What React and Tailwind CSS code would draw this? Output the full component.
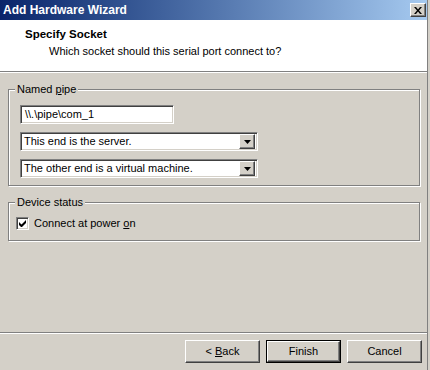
import React from 'react';

const sunken = 'border border-t-[#808080] border-l-[#808080] border-b-white border-r-white shadow-[inset_1px_1px_0_#404040,inset_-1px_-1px_0_#d4d0c8]';
const raised = 'border border-t-white border-l-white border-b-[#404040] border-r-[#404040] shadow-[inset_-1px_-1px_0_#808080]';
const etched = 'border border-[#808080] shadow-[inset_1px_1px_0_#fff,1px_1px_0_#fff]';

function Arrow() {
  return (
    <svg width="7" height="4" viewBox="0 0 7 4" className="block">
      <path d="M0 0h7L3.5 4z" fill="#000" />
    </svg>
  );
}

function Select({ value }) {
  return (
    <div className={`w-[238px] h-[19px] bg-white flex items-center p-[2px] ${sunken}`}>
      <span className="flex-1 pl-[1px] leading-none">{value}</span>
      <div className={`w-[16px] h-[15px] bg-[#d4d0c8] flex items-center justify-center ${raised}`}>
        <Arrow />
      </div>
    </div>
  );
}

function GroupBox({ label, className, children }) {
  return (
    <div className={`relative mx-[8px] w-[412px] ${etched} ${className}`}>
      <span className="absolute -top-[8px] left-[6px] bg-[#d4d0c8] px-[2px] leading-[14px]">{label}</span>
      {children}
    </div>
  );
}

function Button({ children, isDefault }) {
  if (isDefault) {
    return (
      <div className="w-[75px] h-[23px] border border-black">
        <div className={`w-full h-full bg-[#d4d0c8] flex items-center justify-center ${raised}`}>
          <span>{children}</span>
        </div>
      </div>
    );
  }
  return (
    <div className={`w-[75px] h-[23px] bg-[#d4d0c8] flex items-center justify-center ${raised}`}>
      <span>{children}</span>
    </div>
  );
}

export default function App() {
  return (
    <div className="w-[430px] h-[370px] bg-[#d4d0c8] flex overflow-hidden text-[11px] text-black font-['Liberation_Sans',Arial,sans-serif]">
      <div className="w-[427px] flex flex-col">
        {/* Title bar */}
        <div className="h-[20px] flex items-center justify-between pl-[3px] pr-[1px] bg-gradient-to-r from-[#0a246a] to-[#a6caf0]">
          <span className="text-white font-bold text-[12px] leading-none">Add Hardware Wizard</span>
          <div className={`w-[16px] h-[14px] bg-[#d4d0c8] flex items-center justify-center ${raised}`}>
            <svg width="8" height="7" viewBox="0 0 8 7" className="block">
              <path d="M0 0h2l2 2.5L6 0h2L5 3.5 8 7H6L4 4.5 2 7H0l3-3.5z" fill="#000" />
            </svg>
          </div>
        </div>

        {/* Header */}
        <div className="h-[52px] bg-white pl-[25px] pt-[7px] border-b border-[#808080]">
          <div className="font-bold text-[11.5px] leading-[15px]">Specify Socket</div>
          <div className="pl-[24px] leading-[15px] mt-[2px]">Which socket should this serial port connect to?</div>
        </div>
        <div className="h-[1px] bg-white" />

        {/* Body */}
        <div className="flex-1 flex flex-col pt-[16px]">
          <GroupBox label={<>Named <span className="underline">p</span>ipe</>} className="h-[97px] pt-[15px] pl-[11px] flex flex-col gap-[8px]">
            <div className={`w-[154px] h-[19px] bg-white flex items-center pl-[4px] ${sunken}`}>
              <span className="leading-none">{'\\\\.\\pipe\\com_1'}</span>
            </div>
            <Select value="This end is the server." />
            <Select value="The other end is a virtual machine." />
          </GroupBox>

          <GroupBox label="Device status" className="mt-[16px] h-[39px] pt-[14px] pl-[7px] flex items-start gap-[4px]">
            <div className={`w-[13px] h-[13px] bg-white flex items-center justify-center ${sunken}`}>
              <svg width="7" height="7" viewBox="0 0 7 7" className="block">
                <path d="M0 2v3l2 2h1l4-4V0L2.5 4.5z" fill="#000" />
              </svg>
            </div>
            <span className="leading-[13px] ml-[1px]">Connect at power <span className="underline">o</span>n</span>
          </GroupBox>

          <div className="flex-1" />

          {/* Footer */}
          <div className="h-[1px] bg-[#808080]" />
          <div className="h-[1px] bg-white" />
          <div className="h-[36px] flex justify-end gap-[6px] pt-[6px] pr-[5px]">
            <Button>&lt; <span className="underline">B</span>ack</Button>
            <Button isDefault>Finish</Button>
            <Button>Cancel</Button>
          </div>
        </div>
      </div>
      <div className="w-[1px] bg-[#808080]" />
      <div className="w-[2px]" />
    </div>
  );
}
